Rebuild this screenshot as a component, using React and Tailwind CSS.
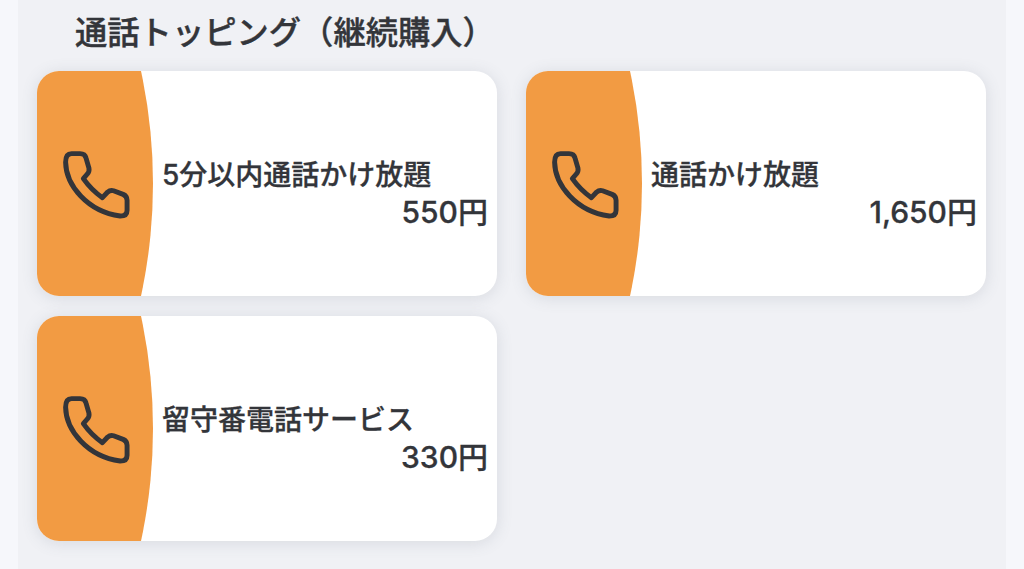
const cards = [
  { title: "5分以内通話かけ放題", price: "550円" },
  { title: "通話かけ放題", price: "1,650円" },
  { title: "留守番電話サービス", price: "330円" },
];

function PhoneIcon() {
  return (
    <svg width="71" height="71" viewBox="90 60 216 216" fill="none" stroke="#33353a" strokeWidth="15" strokeLinejoin="round">
      <path d="M122 74 H148 Q163 74 166 87 L175 118 Q177 129 170 136 L158 150 Q182 184 216 208 L232 191 Q240 184 250 187 L279 198 Q291 203 291 216 V246 Q291 264 270 264 C170 250 105 170 104 100 Q104 74 122 74 Z" />
    </svg>
  );
}

function Card({ title, price }) {
  return (
    <div className="flex h-[225px] overflow-hidden rounded-[22px] bg-white shadow-[0_2px_16px_rgba(90,100,120,0.16)]">
      <div className="flex w-[116px] shrink-0 items-center justify-center bg-[#f29b43] pl-[2px] pt-[2px] [clip-path:circle(533px_at_-417px_50%)]">
        <PhoneIcon />
      </div>
      <div className="flex min-w-0 flex-1 flex-col justify-center pl-[9px] pr-[9px] pt-[20px] text-[#33353a] [-webkit-text-stroke:0.3px_#33353a]">
        <p className="text-[28px] leading-[37px] font-medium">{title}</p>
        <p className="text-right text-[30px] leading-[37px] font-medium">{price}</p>
      </div>
    </div>
  );
}

export default function App() {
  return (
    <div className="h-[569px] overflow-hidden bg-[#f6f7fb] px-[18px] font-['Inter','Noto_Sans_CJK_JP',sans-serif]">
      <div className="h-full bg-[#f0f1f5] pl-[19px] pr-[20px]">
        <h2 className="h-[71px] pl-[38px] pt-[13px] text-[32.3px] leading-[40px] font-medium text-[#33353a] [-webkit-text-stroke:0.4px_#33353a]">
          通話トッピング（継続購入）
        </h2>
        <div className="grid grid-cols-2 gap-x-[29px] gap-y-[20px]">
          {cards.map((c) => (
            <Card key={c.title} {...c} />
          ))}
        </div>
      </div>
    </div>
  );
}
